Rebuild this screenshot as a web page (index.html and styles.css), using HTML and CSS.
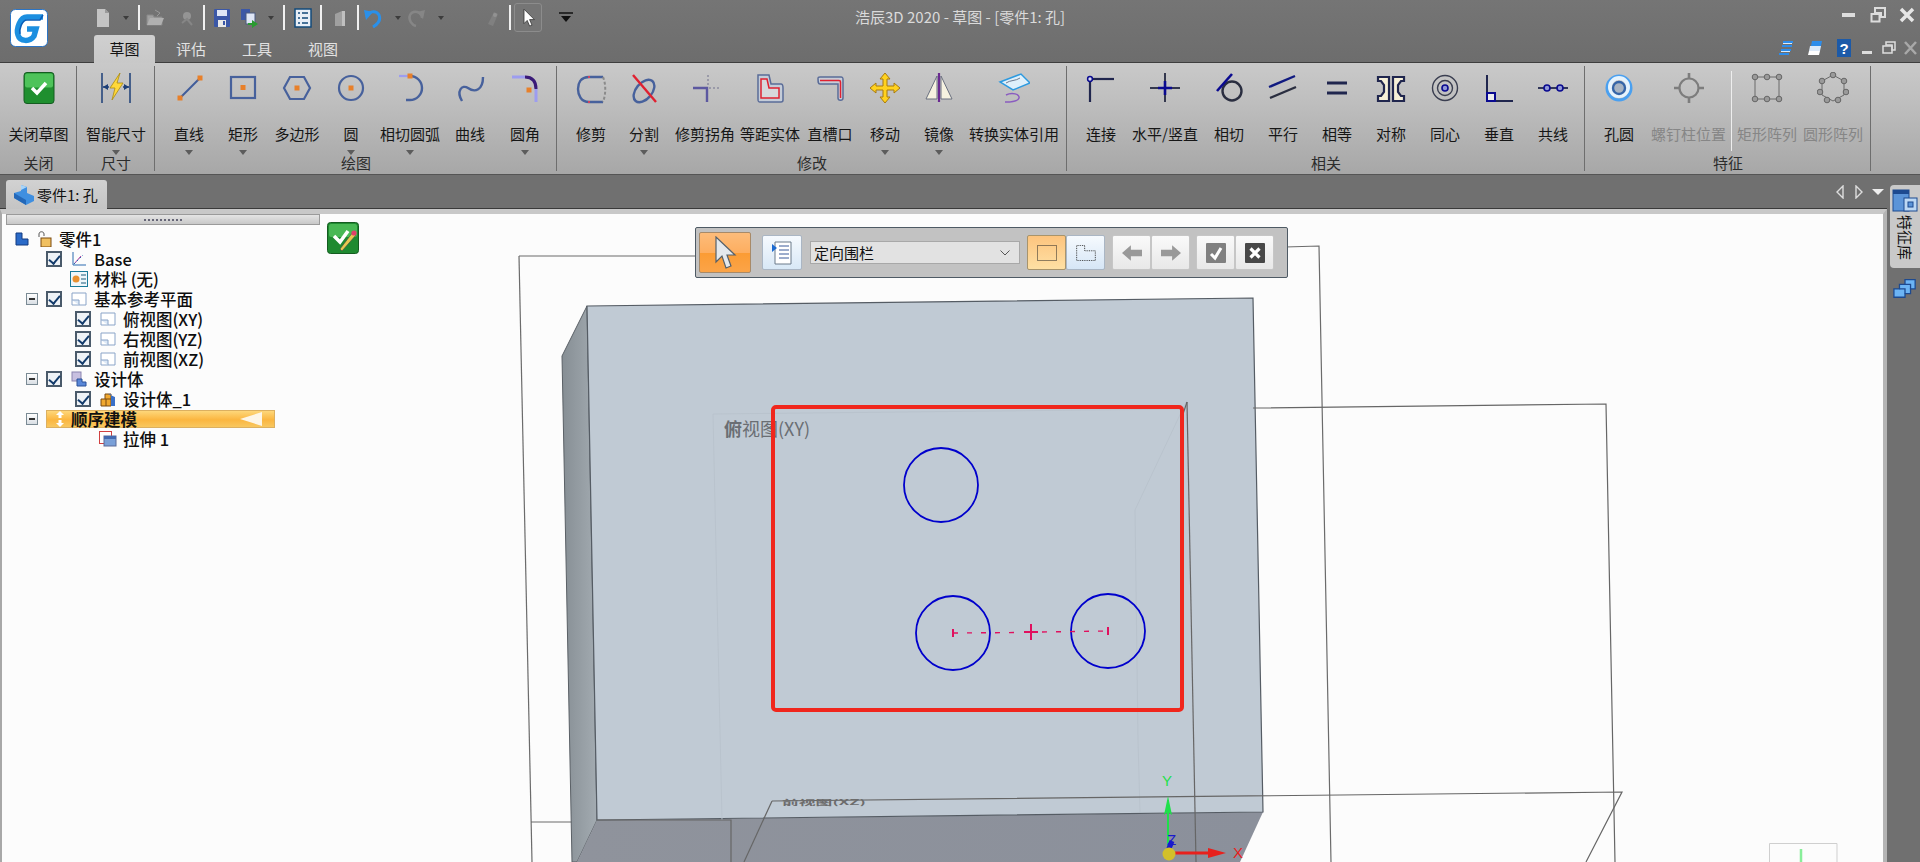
FILE: index.html
```html
<!DOCTYPE html>
<html lang="zh">
<head>
<meta charset="utf-8">
<title>浩辰3D 2020 - 草图 - [零件1: 孔]</title>
<link rel="stylesheet" href="styles.css">
</head>
<body>
<div class="app">
  <header class="chrome">
    <svg class="logo" viewBox="0 0 38 38">
      <rect x="0.500" y="0.500" width="37" height="37" rx="5" fill="#fff" stroke="#2b74c4"/>
      <path d="M33 8 H17 C10 8 6 20 8 26 C10 33 20 33 24 27 L26 20 H17" fill="none" stroke="#1c8fe0" stroke-width="5.500"/>
      <path d="M33 6 L30 11 H17 C12 11 9 20 10 25" fill="none" stroke="#0a5db8" stroke-width="1.500"/>
    </svg>
    <div class="toprow">
      <div class="qat">
        <svg class="qi" viewBox="0 0 20 20"><path d="M4 1H12L16 5V19H4Z" fill="#c4c4c4"/><path d="M12 1V5H16" fill="#9a9a9a"/></svg>
        <i class="mini"></i><b class="qsep"></b>
        <svg class="qi" viewBox="0 0 20 20"><path d="M2 7H8L9 9H17V17H2Z" fill="#a0a0a0" stroke="#8a8a8a"/><path d="M2 17L5 10H19L16 17Z" fill="#b0b0b0"/><path d="M10 2L15 5L12 8" fill="none" stroke="#999"/></svg>
        <svg class="qi" viewBox="0 0 20 20"><circle cx="10" cy="8" r="4" fill="#949494"/><path d="M5 15L10 11L15 17" fill="none" stroke="#868686" stroke-width="2"/></svg>
        <b class="qsep"></b>
        <svg class="qi" viewBox="0 0 20 20"><rect x="2" y="1" width="16" height="18" rx="1" fill="#3b57a6"/><rect x="5" y="2" width="10" height="6" fill="#dfe6f5"/><rect x="6" y="12" width="8" height="7" fill="#e8e8e8"/><rect x="11" y="13" width="2" height="4" fill="#3b57a6"/></svg>
        <svg class="qi" viewBox="0 0 20 20"><rect x="2" y="1" width="9" height="11" fill="#3b57a6"/><rect x="7" y="5" width="9" height="11" fill="#dfe6f5" stroke="#4a5a80"/><path d="M9 15H13V12L19 16L13 20V17H9Z" fill="#2a9a30"/></svg>
        <i class="mini"></i><b class="qsep"></b>
        <svg class="qi" viewBox="0 0 20 20"><rect x="2" y="1" width="16" height="18" fill="#e8eef6" stroke="#124a7a" stroke-width="1.500"/><path d="M5 5H7M9 5H15M5 10H7M9 10H15M5 15H7M9 15H15" stroke="#124a7a" stroke-width="1.500"/></svg>
        <b class="qsep"></b>
        <svg class="qi" viewBox="0 0 20 20"><path d="M5 18V6L12 3H15V18Z" fill="#a0a0a0"/><path d="M12 3H15V18H12Z" fill="#c0c0c0"/></svg>
        <b class="qsep"></b>
        <svg class="qi" viewBox="0 0 20 20"><path d="M4 9C5 3 13 2 16 7C18 12 15 16 10 19" fill="none" stroke="#2a90ea" stroke-width="3"/><path d="M1 2L10 4L3 12Z" fill="#2a90ea"/></svg>
        <i class="mini"></i>
        <svg class="qi" viewBox="0 0 20 20"><path d="M16 10C16 4 7 1 4 7C2 12 6 17 10 18" fill="none" stroke="#868686" stroke-width="2.400"/><path d="M19 2L11 4L17 11Z" fill="#868686"/></svg>
        <i class="mini"></i>
        <span></span>
        <svg class="qi" viewBox="0 0 20 20"><path d="M6 16L12 4L16 6L11 18Z" fill="#808080"/><circle cx="13" cy="7" r="2" fill="#929292"/></svg>
        <b class="qsep"></b>
        <span class="qbtn"><svg viewBox="0 0 20 24" class="qcur"><path d="M5 1V19L9 15L12 22L15 21L12 14H18Z" fill="#fff" stroke="#333"/></svg></span>
        <svg class="qi" viewBox="0 0 20 20"><path d="M3 5H17" stroke="#111" stroke-width="1.500"/><path d="M5 8H15L10 14Z" fill="#111"/></svg>
      </div>
      <div class="apptitle">浩辰3D 2020 - 草图 - [零件1: 孔]</div>
      <div class="winctl">
        <svg viewBox="0 0 16 16" class="wc"><rect x="1" y="6" width="13" height="4" fill="#ddd"/></svg>
        <svg viewBox="0 0 16 16" class="wc"><path d="M5 1H15V10H11V6H5Z" fill="none" stroke="#ddd" stroke-width="2"/><rect x="1.500" y="7" width="8" height="7.500" fill="none" stroke="#ddd" stroke-width="2"/></svg>
        <svg viewBox="0 0 16 16" class="wc"><path d="M2 2L14 14M14 2L2 14" stroke="#e6e6e6" stroke-width="3.500"/></svg>
      </div>
    </div>
    <div class="tabrow">
      <nav class="tabs">
        <span class="tab on">草图</span><span class="tab">评估</span><span class="tab">工具</span><span class="tab">视图</span>
      </nav>
      <div class="mdictl">
        <svg viewBox="0 0 16 16" class="mi"><path d="M5 2H15M4 6H14M3 10H13M1 14H11" stroke="#2c8cea" stroke-width="2.200"/><path d="M5 3.500H14M3 11.500H12" stroke="#dcecfa"/></svg>
        <svg viewBox="0 0 16 16" class="mi"><path d="M5 1H15L14 6H4Z" fill="#2c8cea"/><path d="M3 6H14L13 11H2Z" fill="#dce9f8"/><path d="M2 11H13L12 15H1Z" fill="#fff"/></svg>
        <svg viewBox="0 0 16 18" class="mi help"><rect width="14" height="18" fill="#1c5aa8"/><text x="7" y="14.500" text-anchor="middle" class="helpq">?</text></svg>
        <svg viewBox="0 0 16 16" class="mi"><rect x="2" y="11" width="10" height="3" fill="#ddd"/></svg>
        <svg viewBox="0 0 16 16" class="mi"><path d="M5 2H14V10H11V5H5Z" fill="none" stroke="#ddd" stroke-width="1.500"/><rect x="2" y="6" width="9" height="7" fill="none" stroke="#ddd" stroke-width="1.500"/></svg>
        <svg viewBox="0 0 16 16" class="mi"><path d="M3 2L14 14M14 2L3 14" stroke="#a8a8a8" stroke-width="2.500"/></svg>
      </div>
    </div>
  </header>

  <section class="ribbon">
    <div class="group g-close">
      <div class="btns">
        <div class="rb"><svg class="ic" viewBox="0 0 32 32"><rect x="1" y="0.500" width="30" height="31" rx="3" fill="#1f8f2f" stroke="#145c20"/><rect x="2" y="1.500" width="28" height="14" rx="2" fill="#4ec35a"/><path d="M9 16L14 21L23 11" fill="none" stroke="#fff" stroke-width="3.500"/></svg><span class="lb">关闭草图</span></div>
      </div>
      <div class="gl">关闭</div>
    </div>
    <div class="group g-dim">
      <div class="btns">
        <div class="rb drop"><svg class="ic" viewBox="0 0 32 32"><path d="M2 1V31M30 1V31" stroke="#1d3f78" stroke-width="1.500"/><path d="M3 15H9M23 15H29" stroke="#1d3f78" stroke-width="1.500"/><path d="M3 15L8 12V18ZM29 15L24 12V18Z" fill="#1d3f78"/><path d="M20 1L10 16H15L12 28L23 11H17Z" fill="#ffd83a" stroke="#a98a10" stroke-width="0.800"/></svg><span class="lb">智能尺寸</span></div>
      </div>
      <div class="gl">尺寸</div>
    </div>
    <div class="group g-draw">
      <div class="btns">
        <div class="rb drop"><svg class="ic" viewBox="0 0 32 32"><path d="M7 26L27 6" stroke="#3f5c9a" stroke-width="2"/><rect x="4.500" y="23.500" width="5" height="5" fill="#e8802a"/><rect x="24.500" y="3.500" width="5" height="5" fill="#e8802a"/></svg><span class="lb">直线</span></div>
        <div class="rb drop"><svg class="ic" viewBox="0 0 32 32"><rect x="4" y="5" width="24" height="21" fill="none" stroke="#47619c" stroke-width="2.200"/><rect x="13.500" y="13" width="5" height="5" fill="#e8802a"/></svg><span class="lb">矩形</span></div>
        <div class="rb"><svg class="ic" viewBox="0 0 32 32"><path d="M3 16L9 5H23L29 16L23 27H9Z" fill="none" stroke="#47619c" stroke-width="2.200"/><rect x="13.500" y="13.500" width="5" height="5" fill="#e8802a"/></svg><span class="lb">多边形</span></div>
        <div class="rb drop"><svg class="ic" viewBox="0 0 32 32"><circle cx="16" cy="16" r="12" fill="none" stroke="#47619c" stroke-width="2.200"/><rect x="13.500" y="13.500" width="5" height="5" fill="#e8802a"/></svg><span class="lb">圆</span></div>
        <div class="rb drop"><svg class="ic" viewBox="0 0 32 32"><path d="M5 4H16" stroke="#9d9df0" stroke-width="2.200"/><path d="M16 4A12 12 0 0 1 16 28H12" fill="none" stroke="#47619c" stroke-width="2.400"/><rect x="13.500" y="1.500" width="5" height="5" fill="#e8802a"/></svg><span class="lb">相切圆弧</span></div>
        <div class="rb"><svg class="ic" viewBox="0 0 32 32"><path d="M8 29C2 19 8 12 14 16C21 21 29 18 29 5" fill="none" stroke="#47619c" stroke-width="2.400"/></svg><span class="lb">曲线</span></div>
        <div class="rb drop"><svg class="ic" viewBox="0 0 32 32"><path d="M3 5H16" stroke="#9d9df0" stroke-width="3"/><path d="M16 5C23 5 27 9 27 17" fill="none" stroke="#3a1a78" stroke-width="3"/><path d="M27 17V30" stroke="#9d9df0" stroke-width="3"/><rect x="17.500" y="15.500" width="5" height="5" fill="#e8802a"/></svg><span class="lb">圆角</span></div>
      </div>
      <div class="gl">绘图</div>
    </div>
    <div class="group g-mod">
      <div class="btns">
        <div class="rb"><svg class="ic" viewBox="0 0 32 32"><path d="M28 5H14C5 5 3 12 3 17C3 23 6 30 14 30H28" fill="none" stroke="#47619c" stroke-width="2.400"/><path d="M28 5C31 12 31 22 28 30" fill="none" stroke="#8a8a8a" stroke-width="2" stroke-dasharray="3 2"/><path d="M14 4V6M14 29V31" stroke="#d04060" stroke-width="2"/></svg><span class="lb">修剪</span></div>
        <div class="rb drop"><svg class="ic" viewBox="0 0 32 32"><ellipse cx="16" cy="19" rx="13" ry="8" transform="rotate(-50 16 19)" fill="none" stroke="#47619c" stroke-width="2.400"/><path d="M5 3L28 30" stroke="#e02030" stroke-width="2.400"/></svg><span class="lb">分割</span></div>
        <div class="rb"><svg class="ic" viewBox="0 0 32 32"><path d="M19 3V14" stroke="#9a9aa8" stroke-width="2" stroke-dasharray="2 2"/><path d="M20 16H32" stroke="#9a9aa8" stroke-width="2" stroke-dasharray="2 2"/><path d="M4 16H18V30" fill="none" stroke="#5c58a0" stroke-width="2.400"/></svg><span class="lb">修剪拐角</span></div>
        <div class="rb"><svg class="ic" viewBox="0 0 32 32"><path d="M4 3H15L17 12H27C29 12 29 14 29 16V28C29 30 28 30 27 30H6C4 30 4 29 4 27Z" fill="#c4ccd8" stroke="#5a6c98" stroke-width="1.500"/><path d="M7 7H13L15 16H25V26H7Z" fill="#d7d7dc" stroke="#e02030" stroke-width="1.500"/></svg><span class="lb">等距实体</span></div>
        <div class="rb"><svg class="ic" viewBox="0 0 32 32"><path d="M4 6C4 5 5 5 6 5H27C29 5 29 6 29 8V26C29 29 24 29 24 26V12H6C4 12 4 10 4 6Z" fill="#c8ccd6" stroke="#5a6c98" stroke-width="1.500"/><path d="M6 8.500H25C26 8.500 26.500 9 26.500 10V26" fill="none" stroke="#e02030" stroke-width="1.500"/></svg><span class="lb">直槽口</span></div>
        <div class="rb drop"><svg class="ic" viewBox="0 0 32 32"><path d="M16 1L21 7H18V14H25V11L31 16L25 21V18H18V25H21L16 31L11 25H14V18H7V21L1 16L7 11V14H14V7H11Z" fill="#ffd21e" stroke="#a87a10"/></svg><span class="lb">移动</span></div>
        <div class="rb drop"><svg class="ic" viewBox="0 0 32 32"><path d="M14 4V27H3Z" fill="#f6f2e0" stroke="#6a7080"/><path d="M18 4V27H29Z" fill="#f6f2e0" stroke="#6a7080"/><path d="M16 1V30" stroke="#6a2a90" stroke-width="2.200"/></svg><span class="lb">镜像</span></div>
        <div class="rb"><svg class="ic" viewBox="0 0 32 32"><path d="M2 10L23 2L32 11L15 18Z" fill="#dff0fb" stroke="#2d9ae0" stroke-width="1.500"/><path d="M8 11C12 8 18 9 22 6" fill="none" stroke="#6c7a90"/><path d="M8 23C14 20 22 22 21 26C20 30 11 30 7 30" fill="none" stroke="#8a5cc0" stroke-width="1.500"/></svg><span class="lb">转换实体引用</span></div>
      </div>
      <div class="gl">修改</div>
    </div>
    <div class="group g-rel">
      <div class="btns">
        <div class="rb"><svg class="ic" viewBox="0 0 32 32"><path d="M5 8V30" stroke="#20264e" stroke-width="2.200"/><path d="M7 7H29" stroke="#20264e" stroke-width="2.200"/><circle cx="5" cy="7" r="2.400" fill="#d8d8ee" stroke="#0a0a90" stroke-width="1.500"/></svg><span class="lb">连接</span></div>
        <div class="rb"><svg class="ic" viewBox="0 0 32 32"><path d="M16 1V30M1 16H31" stroke="#34384e" stroke-width="2"/><path d="M16 9V23M9 16H23" stroke="#0a0a90" stroke-width="2.600"/></svg><span class="lb">水平/竖直</span></div>
        <div class="rb"><svg class="ic" viewBox="0 0 32 32"><circle cx="19" cy="19" r="9.500" fill="none" stroke="#2a2e40" stroke-width="2.400"/><path d="M4 19L19 2" stroke="#0a0a90" stroke-width="2.600"/></svg><span class="lb">相切</span></div>
        <div class="rb"><svg class="ic" viewBox="0 0 32 32"><path d="M2 15L28 4" stroke="#101a80" stroke-width="2.400"/><path d="M3 26L29 15" stroke="#2a2e40" stroke-width="2.400"/></svg><span class="lb">平行</span></div>
        <div class="rb"><svg class="ic" viewBox="0 0 32 32"><path d="M6 11H26" stroke="#20264e" stroke-width="3"/><path d="M6 21H26" stroke="#20264e" stroke-width="3"/></svg><span class="lb">相等</span></div>
        <div class="rb"><svg class="ic" viewBox="0 0 32 32"><path d="M3 5H14V29H3V24H6L9 20V13L6 9H3Z" fill="#f6f0d8" stroke="#20264e" stroke-width="2.200"/><path d="M29 5H18V29H29V24H26L23 20V13L26 9H29Z" fill="#f6f0d8" stroke="#20264e" stroke-width="2.200"/></svg><span class="lb">对称</span></div>
        <div class="rb"><svg class="ic" viewBox="0 0 32 32"><circle cx="16" cy="16" r="12.500" fill="none" stroke="#3a3e50" stroke-width="1.400"/><circle cx="16" cy="16" r="7.500" fill="none" stroke="#3a3e50" stroke-width="1.400"/><circle cx="16" cy="16" r="3" fill="#9098d8" stroke="#0a0a90" stroke-width="1.600"/></svg><span class="lb">同心</span></div>
        <div class="rb"><svg class="ic" viewBox="0 0 32 32"><path d="M4 3V29H30" fill="none" stroke="#20264e" stroke-width="2"/><rect x="4" y="21" width="8" height="8" fill="#eee" stroke="#0a0a90" stroke-width="2"/></svg><span class="lb">垂直</span></div>
        <div class="rb"><svg class="ic" viewBox="0 0 32 32"><path d="M1 16H31" stroke="#20264e" stroke-width="1.800"/><circle cx="10" cy="16" r="3" fill="#9098d8" stroke="#0a0a90" stroke-width="1.600"/><circle cx="23" cy="16" r="3" fill="#9098d8" stroke="#0a0a90" stroke-width="1.600"/></svg><span class="lb">共线</span></div>
      </div>
      <div class="gl">相关</div>
    </div>
    <div class="group g-feat">
      <div class="btns">
        <div class="rb"><svg class="ic" viewBox="0 0 32 32"><circle cx="16" cy="16" r="12" fill="none" stroke="#4aa0f0" stroke-width="3"/><circle cx="16" cy="15" r="9" fill="none" stroke="#e6f3fd" stroke-width="4"/><circle cx="16" cy="16" r="6" fill="#a9b4c2" stroke="#3565a8" stroke-width="2.400"/></svg><span class="lb">孔圆</span></div>
        <div class="rb off"><svg class="ic" viewBox="0 0 32 32"><circle cx="16" cy="16" r="9.500" fill="none" stroke="#7d7d7d" stroke-width="2.200"/><path d="M16 1V7M16 25V31M1 16H7M25 16H31" stroke="#7d7d7d" stroke-width="2.600"/></svg><span class="lb">螺钉柱位置</span></div>
        <div class="rb off sepl"><svg class="ic" viewBox="0 0 32 32"><rect x="4" y="5" width="24" height="22" fill="none" stroke="#6a6a6a"/><g fill="#9a9a9a" stroke="#666"><circle cx="4" cy="5" r="2.800"/><circle cx="16" cy="5" r="2.800"/><circle cx="28" cy="5" r="2.800"/><circle cx="4" cy="27" r="2.800"/><circle cx="16" cy="27" r="2.800"/><circle cx="28" cy="27" r="2.800"/></g></svg><span class="lb">矩形阵列</span></div>
        <div class="rb off"><svg class="ic" viewBox="0 0 32 32"><path d="M16 3L27 9V23L16 29L5 23V9Z" fill="none" stroke="#6a6a6a"/><g fill="#9a9a9a" stroke="#666"><circle cx="16" cy="3" r="2.800"/><circle cx="27" cy="9" r="2.800"/><circle cx="29" cy="20" r="2.800"/><circle cx="21" cy="28" r="2.800"/><circle cx="10" cy="28" r="2.800"/><circle cx="3" cy="20" r="2.800"/><circle cx="5" cy="9" r="2.800"/></g></svg><span class="lb">圆形阵列</span></div>
      </div>
      <div class="gl">特征</div>
    </div>
  </section>

  <div class="lower">
    <div class="doc">
      <div class="docstrip">
        <div class="doctab">
          <svg class="dti" viewBox="0 0 22 22"><path d="M8 1L14 3V9L21 12V17L13 21L1 14V9L8 7Z" fill="#3f8fe0"/><path d="M8 1L14 3L8 6Z" fill="#a8d4f8"/><path d="M1 9L13 16V21L1 14Z" fill="#2468b8"/></svg>
          <span>零件1: 孔</span>
        </div>
        <div class="docnav">
          <svg viewBox="0 0 8 14" class="dn"><path d="M7 1L1 7L7 13Z" fill="none" stroke="#ddd" stroke-width="1.400"/></svg>
          <svg viewBox="0 0 8 14" class="dn"><path d="M1 1L7 7L1 13Z" fill="none" stroke="#ddd" stroke-width="1.400"/></svg>
          <svg viewBox="0 0 12 8" class="dd"><path d="M0 1H12L6 7Z" fill="#eee"/></svg>
        </div>
      </div>
      <div class="viewport">
        <svg class="scene" viewBox="2 210 1881 652" width="1881" height="652">
          <g fill="none" stroke="#6b6b6b" stroke-width="1.200">
            <path d="M519 256H700M1285 247L1319 246L1331 862"/>
            <path d="M519 256L532 862"/>
            <path d="M531 822H575"/>
          </g>
          <defs>
            <linearGradient id="side" x1="0" x2="1" y1="0" y2="0"><stop offset="0" stop-color="#868e94"/><stop offset="1" stop-color="#a3abb1"/></linearGradient>
            <linearGradient id="bot" x1="0" x2="1" y1="0" y2="0"><stop offset="0" stop-color="#8f939c"/><stop offset="1" stop-color="#8b909b"/></linearGradient>
          </defs>
          <path d="M587 306L562 356L572 862H577L597 820Z" fill="url(#side)" stroke="#5a6066"/>
          <path d="M597 820L1263 812L1240 862H577Z" fill="url(#bot)"/>
          <path d="M587 306L1253 298L1263 812L597 820Z" fill="#c0cad4" stroke="#555c64" stroke-width="1.200"/>
          <g fill="none" stroke="#b9c3cd">
            <path d="M713 414L722 820"/>
            <path d="M713 414L1186 409"/>
            <path d="M1186 402L1135 510L1138 740L1140 812"/>
          </g>
          <g fill="none" stroke="#666" stroke-width="1.200">
            <path d="M1187 402L1196 862"/>
            <path d="M1183 414L1187 402"/>
            <path d="M1253 408L1606 404L1615 862"/>
            <path d="M772 801L1622 792L1586 862"/>
            <path d="M772 801L744 862"/>
            <path d="M597 820L731 820V862"/>
          </g>
          <text x="782" y="805" class="tiny" textLength="84" lengthAdjust="spacingAndGlyphs">前视图(XZ)</text>
          <text x="724" y="436" class="plane"><tspan class="planeb">俯</tspan>视图(XY)</text>
          <rect x="773" y="407" width="409" height="303" rx="3" fill="none" stroke="#f0261c" stroke-width="4"/>
          <g fill="none" stroke="#0000cc" stroke-width="1.800">
            <circle cx="941" cy="485" r="37"/>
            <circle cx="953" cy="633" r="37"/>
            <circle cx="1108" cy="631" r="37"/>
          </g>
          <path d="M953 633L1022 632.500M1042 632L1108 631" stroke="#e0105e" stroke-width="1.400" stroke-dasharray="5 9" fill="none"/>
          <path d="M953 629V637M1108 627V635" stroke="#e0105e" stroke-width="2"/>
          <path d="M1024 632H1038M1031 624V640" stroke="#e0105e" stroke-width="2"/>
          <text x="1162" y="786" class="axis ay">Y</text>
          <path d="M1168 800V851" stroke="#1ee04a" stroke-width="2"/>
          <path d="M1168 796L1172 815L1168 812L1164 815Z" fill="#1ee04a"/>
          <text x="1167" y="845" class="axis az">Z</text>
          <path d="M1172 841L1168 851" stroke="#1a1acc" stroke-width="5"/>
          <path d="M1175 853H1214" stroke="#e8201c" stroke-width="3"/>
          <path d="M1226 853L1208 848V858Z" fill="#e8201c"/>
          <text x="1233" y="858" class="axis ax">X</text>
          <circle cx="1169" cy="854" r="6.500" fill="#d2c02a"/>
          <path d="M1769.500 862V843.500H1837V862" fill="#fcfcfc" stroke="#cfcfcf"/>
          <path d="M1801 849V862" stroke="#88ee99" stroke-width="2.500"/>
        </svg>

        <div class="fence">
          <div class="fb fb-cur"><svg viewBox="0 0 24 34" class="fcur"><path d="M3 1V26L9 20L13 32L18 30L14 19H22Z" fill="#e4e8ec" stroke="#55606a" stroke-width="1.200"/></svg></div>
          <div class="fb fb-list"><svg viewBox="0 0 20 24" class="fbi"><path d="M3 1H19V23H3Z" fill="#fff" stroke="#6a7a8a"/><path d="M7 5H17M7 9H17M7 13H17M7 17H17" stroke="#3a5a9a"/><path d="M0 3L5 7L0 11Z" fill="#1c6ad0"/></svg></div>
          <div class="fsel"><span>定向围栏</span><svg viewBox="0 0 10 6" class="chev"><path d="M0.500 0.500L5 5L9.500 0.500" fill="none" stroke="#555"/></svg></div>
          <div class="fpair">
            <div class="fb2 on"><svg viewBox="0 0 20 16" class="fbi2"><rect x="0.500" y="0.500" width="19" height="15" fill="none" stroke="#222" stroke-dasharray="1 1"/></svg></div>
            <div class="fb2 blue"><svg viewBox="0 0 22 18" class="fbi2"><path d="M0.500 0.500H9.500V6.500H21.500V17.500H0.500Z" fill="none" stroke="#222" stroke-dasharray="1 1"/></svg></div>
          </div>
          <div class="fpair">
            <div class="fb2"><svg viewBox="0 0 18 14" class="fbi2"><path d="M0 7L8 0V4H18V10H8V14Z" fill="#999"/></svg></div>
            <div class="fb2"><svg viewBox="0 0 18 14" class="fbi2"><path d="M18 7L10 0V4H0V10H10V14Z" fill="#999"/></svg></div>
          </div>
          <div class="fpair">
            <div class="fb2"><svg viewBox="0 0 20 20" class="fbi3"><rect width="20" height="20" rx="1" fill="#808080"/><path d="M5 11L9 15L15 5" fill="none" stroke="#fff" stroke-width="3"/></svg></div>
            <div class="fb2"><svg viewBox="0 0 20 20" class="fbi3"><rect width="20" height="20" rx="1" fill="#484848"/><path d="M5.500 5.500L14.500 14.500M14.500 5.500L5.500 14.500" stroke="#fff" stroke-width="3.200"/></svg></div>
          </div>
        </div>

        <svg class="sketchok" viewBox="0 0 32 32"><rect x="0.500" y="0.500" width="31" height="31" rx="3" fill="#1f8a30" stroke="#145c20"/><rect x="2" y="2" width="28" height="13" rx="2" fill="#48b854"/><path d="M7 14L13 20L21 9" fill="none" stroke="#fff" stroke-width="3.500"/><path d="M26 10L13 27L15 29L29 13Z" fill="#e8c850" stroke="#444" stroke-width="0.600"/><circle cx="27" cy="11" r="2.600" fill="#e0406a"/></svg>

        <aside class="tree">
          <div class="grip"><i></i></div>
          <ul class="nodes">
            <li class="row lv-root"><svg class="ti exproot" viewBox="0 0 14 14"><path d="M1 1H7V7H13V13H1Z" fill="#2a6ac8" stroke="#123a80"/></svg><svg class="ti lock" viewBox="0 0 16 16"><path d="M3 6V3C3 0 8 0 8 3V5" fill="none" stroke="#555"/><rect x="5" y="7" width="10" height="9" fill="#f0c060" stroke="#7a4a10"/></svg><span>零件1</span></li>
            <li class="row lv-1"><span class="cb"></span><svg class="ti" viewBox="0 0 16 16"><path d="M2 1V14H15" fill="none" stroke="#2a6ab0"/><path d="M3 13L10 5" stroke="#c03aa0"/><path d="M3 13L12 4" stroke="#2a6ab0" stroke-dasharray="2 2"/></svg><span>Base</span></li>
            <li class="row lv-mat"><svg class="ti wide" viewBox="0 0 18 16"><rect x="0.500" y="0.500" width="17" height="15" fill="#eef6fa" stroke="#1a7a9a"/><circle cx="6" cy="8" r="3.500" fill="#e89030"/><path d="M11 4H16M11 8H16M11 12H16" stroke="#1a5a7a"/></svg><span>材料 (无)</span></li>
            <li class="row lv-0"><span class="ex"></span><span class="cb"></span><svg class="ti" viewBox="0 0 16 16"><path d="M1 2H15V14H1Z" fill="#fff" stroke="#8aa4c8"/><path d="M1 9H8V14" fill="#dce8f6" stroke="#8aa4c8"/></svg><span>基本参考平面</span></li>
            <li class="row lv-2"><span class="cb"></span><svg class="ti" viewBox="0 0 16 16"><path d="M1 2H15V14H1Z" fill="#fff" stroke="#8aa4c8"/><path d="M1 9H8V14" fill="#dce8f6" stroke="#8aa4c8"/></svg><span>俯视图(XY)</span></li>
            <li class="row lv-2"><span class="cb"></span><svg class="ti" viewBox="0 0 16 16"><path d="M1 2H15V14H1Z" fill="#fff" stroke="#8aa4c8"/><path d="M1 9H8V14" fill="#dce8f6" stroke="#8aa4c8"/></svg><span>右视图(YZ)</span></li>
            <li class="row lv-2"><span class="cb"></span><svg class="ti" viewBox="0 0 16 16"><path d="M1 2H15V14H1Z" fill="#fff" stroke="#8aa4c8"/><path d="M1 9H8V14" fill="#dce8f6" stroke="#8aa4c8"/></svg><span>前视图(XZ)</span></li>
            <li class="row lv-0"><span class="ex"></span><span class="cb"></span><svg class="ti" viewBox="0 0 16 16"><rect x="1" y="1" width="9" height="9" fill="#c8c0e0" stroke="#8a84b0"/><path d="M6 8H11V11H15V15H6Z" fill="#5a88d8" stroke="#2a5098"/></svg><span>设计体</span></li>
            <li class="row lv-2"><span class="cb"></span><svg class="ti" viewBox="0 0 16 16"><path d="M1 8H5V3H11V15H1Z" fill="#f0a830" stroke="#7a4a10"/><path d="M5 8H11M6 8V15" stroke="#7a4a10"/><path d="M8 3L15 6V15H11V3Z" fill="#3a70c8"/></svg><span>设计体_1</span></li>
            <li class="row lv-0"><span class="ex"></span><div class="seq"><svg class="seqarrows" viewBox="0 0 10 18"><path d="M5 1L9 5H6.500V8H3.500V5H1ZM5 17L9 13H6.500V10H3.500V13H1Z" fill="#fff"/></svg><span>顺序建模</span><i class="seqtri"></i></div></li>
            <li class="row lv-ext"><svg class="ti wide" viewBox="0 0 18 16"><rect x="0.500" y="0.500" width="12" height="12" fill="#fff" stroke="#d04040"/><rect x="5" y="5" width="12" height="10" fill="#7aa0d8" stroke="#5a6a98"/><rect x="5" y="5" width="12" height="3" fill="#446ab0"/></svg><span>拉伸 1</span></li>
          </ul>
        </aside>
      </div>
    </div>
    <aside class="rail">
      <div class="ftab">
        <svg viewBox="0 0 26 24" class="fti"><rect x="1" y="1" width="16" height="21" fill="#5b94d8" stroke="#1d4a90"/><rect x="1" y="1" width="16" height="4" fill="#1d4a90"/><rect x="12" y="9" width="13" height="13" fill="#bcd8f4" stroke="#1d4a90"/><rect x="16" y="13" width="5" height="5" fill="#5b94d8" stroke="#1d4a90"/></svg>
        <span class="ftext">特征库</span>
      </div>
      <svg viewBox="0 0 26 22" class="ftl"><path d="M1 12H7V7H13V2H24V12H19V17H13V21H1Z" fill="#6cb4f4" stroke="#1d4a90" stroke-width="1.400"/><path d="M7 12H13V17M13 7H19V12" fill="none" stroke="#1d4a90" stroke-width="1.400"/></svg>
    </aside>
  </div>
</div>
</body>
</html>
```
FILE: styles.css
```css
* { box-sizing: border-box; }
html, body { margin: 0; padding: 0; }
body { font-family: "Noto Sans CJK SC", "Liberation Sans", sans-serif; overflow: hidden; background: #707070; }
ul { list-style: none; margin: 0; padding: 0; }

.app { width: 1920px; height: 862px; display: flex; flex-direction: column; overflow: hidden; }

.chrome { position: relative; height: 63px; flex: none; background: linear-gradient(#757575, #6d6d6d); border-bottom: 1px solid #3e3e3e; }
.logo { position: absolute; left: 10px; top: 9px; width: 38px; height: 38px; }
.toprow { height: 35px; display: flex; align-items: center; justify-content: space-between; padding-left: 92px; }
.qat { display: grid; grid-template-columns: 22px 24px 2px 30px 33px 2px 34px 20px 24px 2px 35px 2px 35px 2px 28px 22px 14px 36px 16px 34px 2px 34px 42px; align-items: center; justify-items: center; height: 35px; }
.qi { width: 20px; height: 20px; }
.mini { display: block; width: 0; height: 0; border-left: 3px solid transparent; border-right: 3px solid transparent; border-top: 4px solid #3c3c3c; }
.qsep { display: block; width: 2px; height: 25px; background: #f0f0f0; }
.qbtn { display: flex; align-items: center; justify-content: center; width: 28px; height: 29px; border: 1px solid #8c8c8c; border-radius: 3px; background: #757575; }
.qcur { width: 16px; height: 20px; }
.apptitle { position: absolute; left: 855px; top: 6px; font-size: 15px; line-height: 22px; color: #dadada; white-space: nowrap; }
.winctl { display: flex; gap: 13px; padding-right: 5px; margin-top: -5px; }
.wc { width: 16px; height: 16px; }
.tabrow { height: 27px; display: flex; justify-content: space-between; align-items: flex-end; }
.tabs { display: flex; margin-left: 94px; }
.tab { width: 66px; height: 28px; display: flex; align-items: center; justify-content: center; padding-bottom: 2px; font-size: 15px; color: #e2e2e2; margin-bottom: -1px; }
.tab.on { width: 61px; margin-right: 3px; color: #141414; background: linear-gradient(#d0d0d0, #c8c8c8); border-radius: 3px 3px 0 0; }
.mdictl { display: grid; grid-template-columns: 29px 30px 23px 21px 21px 16px; align-items: center; padding-right: 2px; padding-bottom: 5px; }
.mi { width: 16px; height: 16px; }
.mi.help { height: 18px; }
.helpq { font: bold 15px "Liberation Sans", sans-serif; fill: #fff; }

.ribbon { height: 112px; flex: none; display: flex; background: linear-gradient(#c9c9c9, #c0c0c0 30%, #a7a7a7); border-bottom: 1px solid #555; color: #161616; }
.group { display: flex; flex-direction: column; position: relative; }
.group::after { content: ""; position: absolute; right: 0; top: 3px; bottom: 3px; width: 1px; background: #6e6e6e; }
.btns { display: grid; grid-auto-flow: column; height: 91px; }
.gl { height: 18px; line-height: 18px; text-align: center; font-size: 15px; color: #2c2c2c; }
.rb { position: relative; display: flex; flex-direction: column; align-items: center; padding-top: 9px; }
.ic { width: 32px; height: 32px; flex: none; }
.lb { margin-top: 20px; font-size: 15px; line-height: 20px; white-space: nowrap; }
.drop::after { content: ""; position: absolute; left: 50%; margin-left: -4px; top: 87px; border-left: 4px solid transparent; border-right: 4px solid transparent; border-top: 5px solid #5c5c5c; }
.off .lb { color: #868686; }
.sepl::before { content: ""; position: absolute; left: 0; top: 8px; width: 1px; height: 80px; background: #eee; }

.g-close { width: 77px; }
.g-close .btns { grid-template-columns: 77px; }
.g-dim { width: 78px; }
.g-dim .btns { grid-template-columns: 78px; }
.g-draw { width: 402px; }
.g-draw .btns { padding-left: 7px; grid-template-columns: 54px 54px 54px 54px 64px 56px 54px; justify-content: start; }
.g-mod { width: 510px; }
.g-mod .btns { padding-left: 7px; grid-template-columns: 54px 52px 70px 60px 60px 50px 58px 92px; justify-content: start; }
.g-rel { width: 518px; }
.g-rel .btns { padding-left: 7px; grid-template-columns: 54px 74px 54px 54px 54px 54px 54px 54px 54px; justify-content: start; }
.g-feat { width: 286px; }
.g-feat .btns { padding-left: 7px; grid-template-columns: 54px 85px 72px 60px; justify-content: start; }

.lower { flex: 1; min-height: 0; display: flex; }
.doc { width: 1890px; display: flex; flex-direction: column; padding-right: 3px; }
.docstrip { height: 34px; flex: none; display: flex; justify-content: space-between; align-items: flex-end; background: #707070; border-bottom: 1px solid #3a3a3a; padding-left: 6px; }
.doctab { width: 101px; height: 29px; margin-bottom: -1px; display: flex; align-items: center; gap: 2px; padding-left: 7px; font-size: 15px; color: #111; white-space: nowrap; background: linear-gradient(#d2d2d2, #c4c4c4); border-radius: 3px 3px 0 0; }
.dti { width: 22px; height: 22px; flex: none; }
.docnav { display: flex; align-items: center; gap: 11px; height: 33px; padding-right: 3px; }
.dn { width: 8px; height: 14px; }
.dd { width: 12px; height: 8px; margin-left: -2px; }

.viewport { flex: 1; min-height: 0; position: relative; background: #fcfcfc; border-top: 5px solid #c8c8c8; border-left: 2px solid #a8a8a8; border-right: 4px solid #b4b4b4; overflow: hidden; }
.scene { position: absolute; left: 0; top: -4px; display: block; }
.tiny { font-size: 7px; font-weight: 700; fill: #6c6c6c; }
.plane { font-size: 18px; fill: #6a6e73; }
.planeb { font-weight: 700; }
.axis { font: 15px "Liberation Sans", sans-serif; }
.ay { fill: #1ee04a; }
.az { fill: #1a1acc; }
.ax { fill: #e8201c; }

.fence { position: absolute; left: 693px; top: 13px; width: 593px; height: 51px; display: flex; align-items: center; padding-left: 3px; background: #c2c2c2; border: 1px solid #4e5a64; border-radius: 2px; }
.fb { display: flex; align-items: center; justify-content: center; border-radius: 2px; }
.fb-cur { width: 52px; height: 41px; background: linear-gradient(#fdbc7a, #fdae60 50%, #fb9c34 52%, #fba448); border: 1px solid #a88a68; }
.fcur { width: 24px; height: 34px; }
.fb-list { width: 40px; height: 35px; margin-left: 11px; background: linear-gradient(#f6fafe, #d8e8f6); border: 1px solid #aab6c4; }
.fbi { width: 20px; height: 24px; }
.fsel { width: 210px; height: 23px; margin-left: 8px; padding: 0 3px; display: flex; justify-content: space-between; align-items: center; background: #e2e2e2; border: 1px solid #a8a8a8; font-size: 15px; color: #111; }
.chev { width: 10px; height: 6px; margin-right: 6px; }
.fpair { display: flex; margin-left: 7px; height: 35px; }
.fpair:last-child { margin-left: 6px; }
.fb2 { width: 39px; height: 35px; display: flex; align-items: center; justify-content: center; background: linear-gradient(#fafafa, #e8e8e8); border: 1px solid #c6c6c6; border-radius: 2px; }
.fb2.on { background: linear-gradient(#fdc47e, #fee0a4); border-color: #a8946c; }
.fb2.blue { background: linear-gradient(#f6fafe, #d6e6f6); border-color: #aab6c4; }
.fbi2 { width: 20px; height: 16px; }
.fbi3 { width: 20px; height: 20px; }

.sketchok { position: absolute; left: 325px; top: 8px; width: 32px; height: 32px; }

.tree { position: absolute; left: 0; top: 0; width: 322px; color: #0e0e0e; }
.grip { width: 314px; height: 11px; margin-left: 4px; display: flex; align-items: center; justify-content: center; background: linear-gradient(#e4e4e4, #c8c8c8); border: 1px solid #9a9a9a; }
.grip i { display: block; width: 38px; height: 2px; background: repeating-linear-gradient(90deg, #667 0 2px, transparent 2px 4px); }
.nodes { padding-top: 4px; }
.row { height: 20px; display: flex; align-items: center; font-size: 16.500px; font-weight: 500; line-height: 20px; white-space: nowrap; }
.lv-root { padding-left: 13px; }
.lv-1 { padding-left: 44px; }
.lv-mat { padding-left: 68px; }
.lv-0 { padding-left: 24px; }
.lv-2 { padding-left: 73px; }
.lv-ext { padding-left: 97px; }
.ex { width: 12px; height: 12px; margin-right: 8px; flex: none; border: 1px solid #7a8a94; background: linear-gradient(#fff, #d8dee4) ; position: relative; }
.ex::after { content: ""; position: absolute; left: 2px; right: 2px; top: 4px; height: 2px; background: #333; }
.cb { width: 16px; height: 16px; flex: none; margin-right: 9px; border: 2px solid #4a5a6a; background: #eef2f6; position: relative; }
.cb::after { content: ""; position: absolute; left: 3px; top: 0; width: 5px; height: 9px; border-right: 2.500px solid #123a6a; border-bottom: 2.500px solid #123a6a; transform: rotate(40deg); }
.ti { width: 16px; height: 16px; flex: none; margin-right: 7px; }
.ti.wide { width: 18px; margin-right: 6px; }
.exproot { width: 14px; height: 14px; margin-right: 7px; }
.lock { margin-right: 7px; }
.seq { width: 229px; height: 18px; display: flex; align-items: center; padding-left: 8px; position: relative; background: linear-gradient(#fed77a, #fbb640 55%, #f8c860); border: 1px solid #dcb060; color: #111; font-weight: 700; }
.seqarrows { width: 10px; height: 18px; margin-right: 6px; flex: none; }
.seqtri { position: absolute; right: 12px; top: 1px; width: 0; height: 0; border-top: 7px solid transparent; border-bottom: 7px solid transparent; border-right: 22px solid #fdf6e8; }

.rail { width: 30px; flex: none; background: #707070; padding-top: 10px; display: flex; flex-direction: column; align-items: center; }
.ftab { width: 30px; height: 83px; display: flex; flex-direction: column; align-items: center; padding-top: 4px; background: #c9c9c9; border-radius: 4px 0 0 4px; }
.fti { width: 26px; height: 24px; flex: none; }
.ftext { writing-mode: vertical-rl; text-orientation: sideways; font-size: 15px; line-height: 20px; color: #111; margin-top: 2px; }
.ftl { width: 24px; height: 22px; margin-top: 9px; }
```
